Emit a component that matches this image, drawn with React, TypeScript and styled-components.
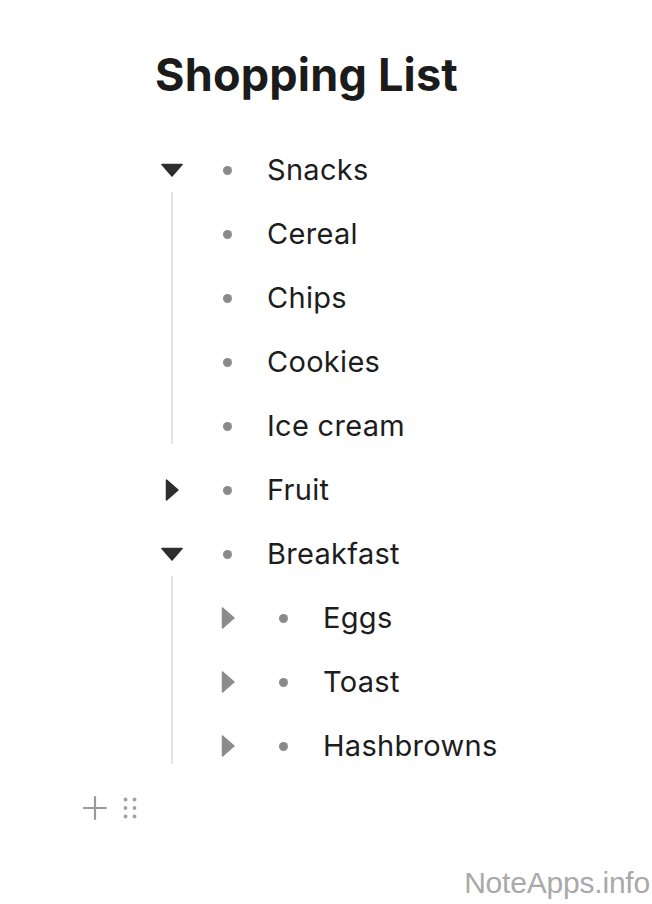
import React from "react";
import styled, { createGlobalStyle } from "styled-components";

const Global = createGlobalStyle`
  html, body { margin: 0; padding: 0; background: #ffffff; }
  body { font-family: Inter, "Noto Sans", sans-serif; color: #1f1f1f; }
`;

const Page = styled.div`
  position: relative;
  width: 652px;
  height: 904px;
  overflow: hidden;
  background: #fff;
`;

const Title = styled.h1`
  margin: 0;
  padding: 49px 0 0 155px;
  font-family: Inter, sans-serif;
  font-weight: 700;
  font-size: 45px;
  line-height: 52px;
  letter-spacing: 0.2px;
  color: #1b1b1b;
`;

const List = styled.div`
  margin-top: 37px;
  padding-left: 144px;
  display: flex;
  flex-direction: column;
`;

const Row = styled.div<{ $depth: number }>`
  display: grid;
  grid-template-columns: 56px 54px 1fr;
  align-items: center;
  height: 64px;
  margin-left: ${(p) => p.$depth * 56}px;
`;

const ToggleCell = styled.div`
  display: flex;
  justify-content: center;
  align-items: center;
  height: 100%;
`;

const Bullet = styled.div`
  justify-self: center;
  width: 9px;
  height: 9px;
  border-radius: 50%;
  background: #8a8a8a;
`;

const Label = styled.span`
  margin-left: 13px;
  margin-bottom: 2px;
  font-size: 29px;
  color: #1d1d1d;
  letter-spacing: 0.3px;
  white-space: nowrap;
`;

const Children = styled.div<{ $depth: number }>`
  position: relative;
  &::before {
    content: "";
    position: absolute;
    left: ${(p) => p.$depth * 56 + 27}px;
    top: -10px;
    bottom: 14px;
    width: 1.5px;
    background: #e3e3e3;
  }
`;

const AddRow = styled.div`
  display: flex;
  align-items: center;
  height: 64px;
  margin-left: -62px;
  gap: 15px;
  margin-top: -2px;
`;

const Watermark = styled.div`
  position: absolute;
  right: 2px;
  bottom: 4px;
  font-family: "Liberation Sans", Arial, sans-serif;
  font-size: 30px;
  color: #a9a9a9;
  letter-spacing: -0.2px;
`;

const Tri = ({ dir, color }: { dir: "down" | "right"; color: string }) =>
  dir === "down" ? (
    <svg width="24" height="14" viewBox="0 0 24 14">
      <path d="M2 1.5 H22 L12 13 Z" fill={color} stroke={color} strokeWidth="1.5" strokeLinejoin="round" />
    </svg>
  ) : (
    <svg width="16" height="24" viewBox="0 0 16 24">
      <path d="M2.5 2 V22 L14 12 Z" fill={color} stroke={color} strokeWidth="1.5" strokeLinejoin="round" />
    </svg>
  );

type Item = { label: string; toggle?: "down" | "right"; indent?: boolean; children?: Item[] };

const data: Item[] = [
  {
    label: "Snacks",
    toggle: "down",
    indent: false,
    children: [
      { label: "Cereal" },
      { label: "Chips" },
      { label: "Cookies" },
      { label: "Ice cream" },
    ],
  },
  { label: "Fruit", toggle: "right" },
  {
    label: "Breakfast",
    toggle: "down",
    indent: true,
    children: [
      { label: "Eggs", toggle: "right" },
      { label: "Toast", toggle: "right" },
      { label: "Hashbrowns", toggle: "right" },
    ],
  },
];

const renderItems = (items: Item[], depth: number): React.ReactNode =>
  items.map((it) => (
    <React.Fragment key={it.label}>
      <Row $depth={depth}>
        <ToggleCell>
          {it.toggle && <Tri dir={it.toggle} color={depth === 0 ? "#2e2e2e" : "#8c8c8c"} />}
        </ToggleCell>
        <Bullet />
        <Label>{it.label}</Label>
      </Row>
      {it.children && it.toggle === "down" && (
        <Children $depth={depth}>{renderItems(it.children, it.indent ? depth + 1 : depth)}</Children>
      )}
    </React.Fragment>
  ));

export default function App() {
  return (
    <Page>
      <Global />
      <Title>Shopping List</Title>
      <List>
        {renderItems(data, 0)}
        <AddRow>
          <svg width="26" height="26" viewBox="0 0 26 26">
            <path d="M13 2 V24 M2 13 H24" stroke="#9a9a9a" strokeWidth="2.2" strokeLinecap="round" />
          </svg>
          <svg width="14" height="24" viewBox="0 0 14 24">
            {[0, 1, 2].map((r) =>
              [0, 1].map((c) => (
                <circle key={`${r}-${c}`} cx={2.5 + c * 9} cy={3.5 + r * 8.5} r="1.9" fill="#a3a3a3" />
              ))
            )}
          </svg>
        </AddRow>
      </List>
      <Watermark>NoteApps.info</Watermark>
    </Page>
  );
}
